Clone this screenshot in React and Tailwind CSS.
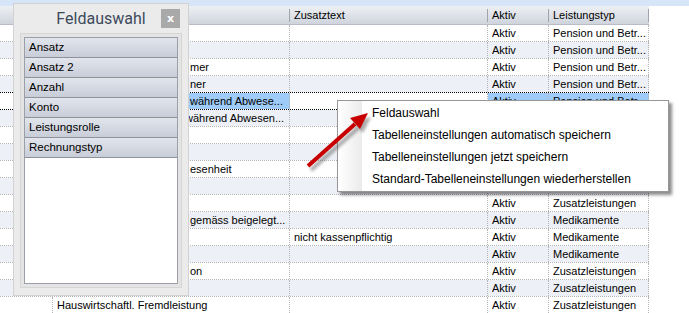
import React from 'react';

const cols = ['w-[53px]', 'w-[237px]', 'w-[198px]', 'w-[61px]', 'w-[100px]'];

// pre: part of the name that lies under the Feldauswahl panel
const rows = [
  { c1: 'Pension und Betreuung', typ: 'Pension und Betr...' },
  { c1: 'Pension Ferienbett', typ: 'Pension und Betr...' },
  { pre: 'Betreuung Einzelzim', c1: 'mer', typ: 'Pension und Betr...' },
  { pre: 'Betreuung Ehepart', c1: 'ner', typ: 'Pension und Betr...' },
  { pre: 'Reservationstaxe', c1: 'während Abwese...', typ: 'Pension und Betr...', selected: true },
  { pre: 'Reservationstaxe Pflege', preW: 'w-[128px]', c1: 'während Abwesen...', typ: 'Pension und Betr...' },
  { c1: 'Taxreduktion', typ: 'Pension und Betr...' },
  { c1: 'Betreuungstaxe', typ: 'Pension und Betr...' },
  { pre: 'Rückvergütung bei Abw', c1: 'esenheit', typ: 'Pension und Betr...' },
  { c1: 'Pflegetaxe', typ: 'Zusatzleistungen' },
  { c1: 'Wäscheservice', typ: 'Zusatzleistungen' },
  { pre: 'Medikamente', c1: 'gemäss beigelegt...', typ: 'Medikamente' },
  { c1: 'Medikamente', zus: 'nicht kassenpflichtig', typ: 'Medikamente' },
  { c1: 'Verbandmaterial', typ: 'Medikamente' },
  { pre: 'Coiffeur Konsumati', c1: 'on', typ: 'Zusatzleistungen' },
  { c1: 'Fusspflege', typ: 'Zusatzleistungen' },
  { c1: 'Hauswirtschaftl. Fremdleistung', typ: 'Zusatzleistungen' },
];

const fields = ['Ansatz', 'Ansatz 2', 'Anzahl', 'Konto', 'Leistungsrolle', 'Rechnungstyp'];

const menuItems = [
  'Feldauswahl',
  'Tabelleneinstellungen automatisch speichern',
  'Tabelleneinstellungen jetzt speichern',
  'Standard-Tabelleneinstellungen wiederherstellen',
];

const HeaderCell = ({ width, label }) => (
  <div className={`${width} h-full flex items-center justify-between`}>
    <span className="pl-[4px]">{label}</span>
    <div className="w-px h-[13px] bg-[#9ea3ad] shrink-0" />
  </div>
);

const Cell = ({ width, bg, children }) => (
  <div
    className={`${width} ${bg} h-full flex items-center pl-[4px] border-r border-dotted border-[#b4b4b4] overflow-hidden whitespace-nowrap shrink-0`}
  >
    {children}
  </div>
);

const App = () => {
  return (
    <div className="relative w-[689px] h-[313px] overflow-hidden bg-white text-[11px] text-black font-['Liberation_Sans',Arial,sans-serif]">
      {/* Grid */}
      <div className="h-[6px] bg-[#d6e6f8]" />
      <div className="flex h-[19px] w-[649px] bg-gradient-to-b from-[#eef0f3] to-[#cfd4dd] border-b border-[#b7bcc6]">
        <HeaderCell width={cols[0]} label="" />
        <HeaderCell width={cols[1]} label="" />
        <HeaderCell width={cols[2]} label="Zusatztext" />
        <HeaderCell width={cols[3]} label="Aktiv" />
        <HeaderCell width={cols[4]} label="Leistungstyp" />
      </div>
      <div className="flex flex-col">
        {rows.map((r, i) => {
          const base = i % 2 === 1 ? 'bg-[#edf0f6]' : 'bg-white';
          const sel = r.selected ? 'bg-[#9ecbf7]' : base;
          return (
            <div
              key={i}
              className={`flex h-[17px] w-[649px] border-b border-dotted ${
                r.selected ? 'border-t border-t-black border-b-black -mt-px h-[18px]' : 'border-[#b4b4b4]'
              }`}
            >
              <Cell width={cols[0]} bg={base} />
              <Cell width={cols[1]} bg={sel}>
                {r.pre && <span className={`${r.preW || 'w-[133px]'} shrink-0`}>{r.pre}</span>}
                <span>{r.c1}</span>
              </Cell>
              <Cell width={cols[2]} bg={base}>{r.zus}</Cell>
              <Cell width={cols[3]} bg={sel}>Aktiv</Cell>
              <Cell width={cols[4]} bg={sel}>{r.typ}</Cell>
            </div>
          );
        })}
      </div>

      {/* Feldauswahl panel */}
      <div className="absolute left-[13px] top-[3px] w-[176px] h-[293px] bg-[#ebebeb] border border-[#d2d2d2] flex flex-col">
        <div className="relative h-[29px] flex items-center justify-center">
          <span className="text-[16px] text-[#3d4a5c] font-['Roboto',sans-serif] pt-[1px]">Feldauswahl</span>
          <button className="absolute right-[8px] top-[5px] w-[19px] h-[19px] bg-[#a9a9a9] text-white text-[11px] font-bold leading-none flex items-center justify-center font-['DejaVu_Sans',sans-serif]">
            x
          </button>
        </div>
        <div className="mx-[6px] h-[255px] border border-[#d6d6d6] bg-[#e4e4e4] p-[3px]">
          <div className="h-full border border-[#9b9fa7] bg-white flex flex-col">
            {fields.map((f) => (
              <div
                key={f}
                className="h-[20px] shrink-0 flex items-center pl-[4px] text-[11.5px] bg-gradient-to-b from-[#e2e5ec] to-[#c8cdd8] border-b border-[#8d929d]"
              >
                {f}
              </div>
            ))}
          </div>
        </div>
      </div>

      {/* Context menu */}
      <div className="absolute left-[337px] top-[100px] w-[332px] bg-white border border-[#979797] shadow-[3px_3px_3px_rgba(0,0,0,0.45)] flex text-[12px]">
        <div className="w-[24px] shrink-0 bg-gradient-to-r from-white to-[#ebebeb]" />
        <div className="flex flex-col py-[1px] flex-1">
          {menuItems.map((m) => (
            <div key={m} className="h-[22px] flex items-center pl-[10px]">
              {m}
            </div>
          ))}
        </div>
      </div>

      {/* Red arrow */}
      <svg className="absolute left-[298px] top-[104px]" width="84" height="80" viewBox="0 0 84 80">
        <defs>
          <filter id="blur" x="-20%" y="-20%" width="140%" height="140%">
            <feGaussianBlur stdDeviation="1.5" />
          </filter>
        </defs>
        <g transform="translate(3,4)" opacity="0.45" filter="url(#blur)">
          <line x1="10" y1="62" x2="57" y2="20" stroke="#444" strokeWidth="4" />
          <polygon points="70,9 62,25 52,14" fill="#444" />
        </g>
        <line x1="10" y1="62" x2="57" y2="20" stroke="#c80000" strokeWidth="4" />
        <polygon points="70,9 62,25 52,14" fill="#c80000" />
      </svg>
    </div>
  );
};

export default App;
